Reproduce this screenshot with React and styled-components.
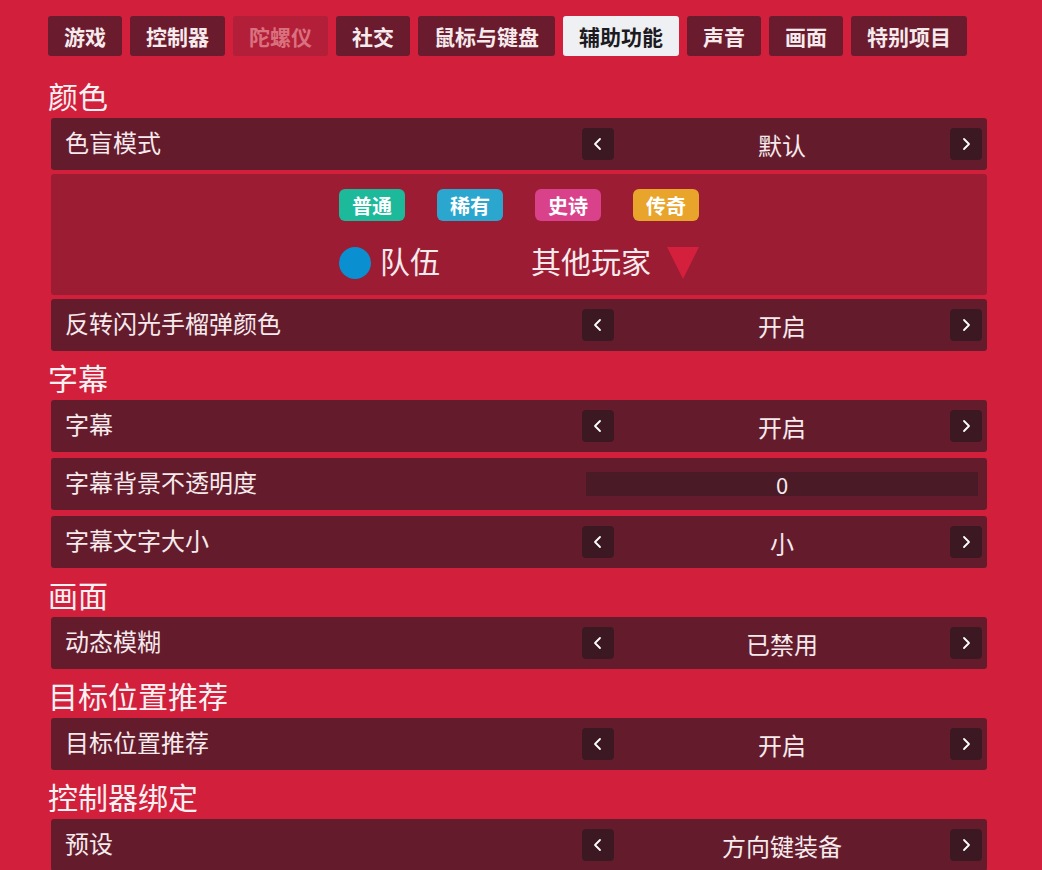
import React from 'react'
import styled, { createGlobalStyle } from 'styled-components'

const GlobalStyle = createGlobalStyle`
  html, body {
    margin: 0;
    padding: 0;
    background: #d21f3c;
  }
  body {
    font-family: "Noto Sans CJK SC", "Noto Sans", sans-serif;
    color: #f6eaed;
  }
`;

const Page = styled.div`
  min-height: 870px;
  padding: 16px 0 0 48px;
  box-sizing: border-box;
  overflow: hidden;
`;

const Tabs = styled.div`
  display: flex;
  gap: 8px;
  margin-bottom: 17px;
`;

const Tab = styled.div`
  height: 40px;
  padding: 0 16px;
  border-radius: 3px;
  display: flex;
  align-items: center;
  font-size: 21px;
  font-weight: 700;
  background: ${p => p.$active ? '#eff0f3' : p.$disabled ? '#b31f38' : '#6a1b2d'};
  color: ${p => p.$active ? '#1d1b22' : p.$disabled ? '#d9717f' : '#f6eaed'};
`;

const Header = styled.div`
  margin-top: 4px;
  height: 45px;
  line-height: 45px;
  font-size: 30px;
  color: #fbf0f2;
`;

const List = styled.div`
  margin-left: 3px;
  width: 936px;
  display: flex;
  flex-direction: column;
  gap: ${p => p.$gap || 4}px;
`;

const Row = styled.div`
  height: 52px;
  border-radius: 3px;
  background: #641c2d;
  display: flex;
  align-items: center;
  justify-content: space-between;
  padding: 0 5px 0 14px;
  box-sizing: border-box;
`;

const Label = styled.div`
  font-size: 24px;
  line-height: 1;
  padding-bottom: 4px;
`;

const Control = styled.div`
  width: 400px;
  display: flex;
  align-items: center;
  justify-content: space-between;
`;

const Arrow = styled.div`
  width: 32px;
  height: 32px;
  border-radius: 4px;
  background: #3c1822;
  display: flex;
  align-items: center;
  justify-content: center;
`;

const Value = styled.div`
  flex: 1;
  text-align: center;
  font-size: 24px;
  line-height: 1;
  padding-top: 1px;
`;

const Track = styled.div`
  width: 392px;
  margin: 0 4px;
  height: 24px;
  background: #4a1a27;
  display: flex;
  align-items: center;
  justify-content: center;
  font-size: 22px;
`;

const Preview = styled.div`
  height: 121px;
  border-radius: 3px;
  background: #9c1c34;
  display: flex;
  flex-direction: column;
  align-items: center;
  padding-top: 15px;
  box-sizing: border-box;
`;

const PreviewLine = styled.div`
  width: 360px;
  display: flex;
  align-items: center;
  justify-content: space-between;
  margin-top: ${p => p.$top || 0}px;
`;

const Tag = styled.div`
  width: 66px;
  height: 32px;
  border-radius: 6px;
  background: ${p => p.$color};
  color: #fff;
  font-size: 20px;
  font-weight: 700;
  display: flex;
  align-items: center;
  justify-content: center;
`;

const Group = styled.div`
  display: flex;
  align-items: center;
  gap: ${p => p.$gap}px;
  font-size: 30px;
  line-height: 32px;
`;

const Caption = styled.span`
  position: relative;
  top: -3px;
`;

const Dot = styled.div`
  width: 32px;
  height: 32px;
  border-radius: 50%;
  background: #0a8fd1;
`;

const Chevron = ({ dir }) => (
  <svg width="12" height="14" viewBox="0 0 12 14">
    <polyline
      points={dir === 'left' ? '8,2 3,7 8,12' : '4,2 9,7 4,12'}
      fill="none"
      stroke="#fff"
      strokeWidth="1.8"
      strokeLinecap="round"
      strokeLinejoin="round"
    />
  </svg>
);

function Setting({ label, value }) {
  return (
    <Row>
      <Label>{label}</Label>
      <Control>
        <Arrow><Chevron dir="left" /></Arrow>
        <Value>{value}</Value>
        <Arrow><Chevron dir="right" /></Arrow>
      </Control>
    </Row>
  );
}

const tabs = ['游戏', '控制器', '陀螺仪', '社交', '鼠标与键盘', '辅助功能', '声音', '画面', '特别项目'];

export default function App() {
  return (
    <>
      <GlobalStyle />
      <Page>
        <Tabs>
          {tabs.map(t => (
            <Tab key={t} $active={t === '辅助功能'} $disabled={t === '陀螺仪'}>{t}</Tab>
          ))}
        </Tabs>

        <Header>颜色</Header>
        <List>
          <Setting label="色盲模式" value="默认" />
          <Preview>
            <PreviewLine>
              <Tag $color="#1db99b">普通</Tag>
              <Tag $color="#2ba7cf">稀有</Tag>
              <Tag $color="#d9428b">史诗</Tag>
              <Tag $color="#e8a42b">传奇</Tag>
            </PreviewLine>
            <PreviewLine $top={26}>
              <Group $gap={9}><Dot /><Caption>队伍</Caption></Group>
              <Group $gap={16}>
                <Caption>其他玩家</Caption>
                <svg width="32" height="32" viewBox="0 0 32 32">
                  <polygon points="0,0 32,0 16,32" fill="#d41f3d" />
                </svg>
              </Group>
            </PreviewLine>
          </Preview>
          <Setting label="反转闪光手榴弹颜色" value="开启" />
        </List>

        <Header>字幕</Header>
        <List $gap={6}>
          <Setting label="字幕" value="开启" />
          <Row>
            <Label>字幕背景不透明度</Label>
            <Control>
              <Track>0</Track>
            </Control>
          </Row>
          <Setting label="字幕文字大小" value="小" />
        </List>

        <Header>画面</Header>
        <List>
          <Setting label="动态模糊" value="已禁用" />
        </List>

        <Header>目标位置推荐</Header>
        <List>
          <Setting label="目标位置推荐" value="开启" />
        </List>

        <Header>控制器绑定</Header>
        <List>
          <Setting label="预设" value="方向键装备" />
        </List>
      </Page>
    </>
  );
}
